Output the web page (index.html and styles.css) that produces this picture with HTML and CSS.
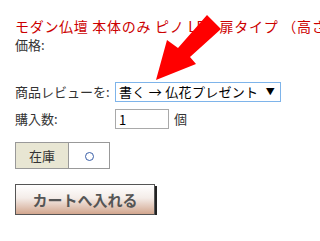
FILE: index.html
```html
<!DOCTYPE html>
<html>
<head>
    <title>モダン仏壇 本体のみ ピノ LED 扉タイプ</title>
    <link rel="stylesheet" href="styles.css">
</head>
<body>
    <div class="item">
        <h1 class="item-title">モダン仏壇 本体のみ ピノ LED 扉タイプ （高さ</h1>
        <div class="price">価格:</div>

        <div class="form-row review-row">
            <label class="form-label">商品レビューを:</label>
            <div class="fake-select">
                <span>書く → 仏花プレゼント</span>
                <span class="caret">▼</span>
            </div>
        </div>

        <div class="form-row qty-row">
            <label class="form-label">購入数:</label>
            <input class="qty-input" type="text" value="1">
            <span class="unit">個</span>
        </div>

        <table class="stock">
            <tr>
                <th>在庫</th>
                <td><span class="stock-mark"></span></td>
            </tr>
        </table>

        <button class="cart-button">カートへ入れる</button>
    </div>

    <!-- the big red pointer drawn over the page -->
    <svg class="pointer" width="320" height="241" viewBox="0 0 320 241">
        <polygon points="156,80 167,40 178,48 207,15 221,29 190,57 196,64" fill="#ff0000"/>
    </svg>
</body>
</html>
```

FILE: styles.css
```css
body {
    margin: 0;
    padding: 0;
    background-color: #fff;
    color: #333;
    font-family: "Noto Sans CJK JP", "Noto Sans", sans-serif;
    font-size: 13px;
    line-height: 18px;
    overflow: hidden;
}

.item {
    padding: 17px 0 0 15px;
}

.item-title {
    margin: 0;
    font-size: 14px;
    font-weight: normal;
    line-height: 18px;
    letter-spacing: 0.7px;
    color: #cc0000;
    white-space: nowrap;
    overflow: hidden;
}

.price {
    margin-top: 1px;
    height: 18px;
}

.form-row {
    display: flex;
    align-items: center;
}

.review-row {
    margin-top: 28px;
    height: 20px;
}

.qty-row {
    margin-top: 7px;
    height: 20px;
}

.form-label {
    width: 100px;
}

.fake-select {
    box-sizing: border-box;
    width: 166px;
    height: 20px;
    border: 1px solid #7eb4ea;
    display: flex;
    align-items: center;
    justify-content: space-between;
    padding: 0 5px 0 3px;
    font-size: 13px;
    letter-spacing: 0.3px;
    color: #000;
    white-space: nowrap;
}

.caret {
    font-size: 9px;
    color: #000;
}

.qty-input {
    box-sizing: border-box;
    width: 54px;
    height: 20px;
    margin: 0;
    border: 1px solid #a9a9a9;
    padding: 0 3px;
    font-family: "Noto Sans CJK JP", "Noto Sans", sans-serif;
    font-size: 13px;
    color: #000;
}

.unit {
    margin-left: 5px;
}

.stock {
    margin-top: 13px;
    border-collapse: collapse;
}

.stock th,
.stock td {
    border: 1px solid #999;
    height: 25px;
    padding: 0;
    text-align: center;
    font-weight: normal;
}

.stock th {
    width: 52px;
    background-color: #e8e6d3;
}

.stock td {
    width: 40px;
    background-color: #fff;
}

.stock-mark {
    display: inline-block;
    width: 7px;
    height: 7px;
    border: 1px solid #3a5fa8;
    border-radius: 50%;
    vertical-align: middle;
}

.cart-button {
    display: block;
    margin-top: 15px;
    width: 140px;
    height: 31px;
    border: 1px solid #555;
    background: linear-gradient(#ffffff 0%, #f4ece8 45%, #d2a68e 100%);
    box-shadow: 2px 2px 0 #222;
    font-family: "Noto Sans CJK JP", "Noto Sans", sans-serif;
    font-size: 15px;
    font-weight: bold;
    color: #555;
    padding: 0;
    cursor: pointer;
}

.pointer {
    position: absolute;
    left: 0;
    top: 0;
    pointer-events: none;
}
```
